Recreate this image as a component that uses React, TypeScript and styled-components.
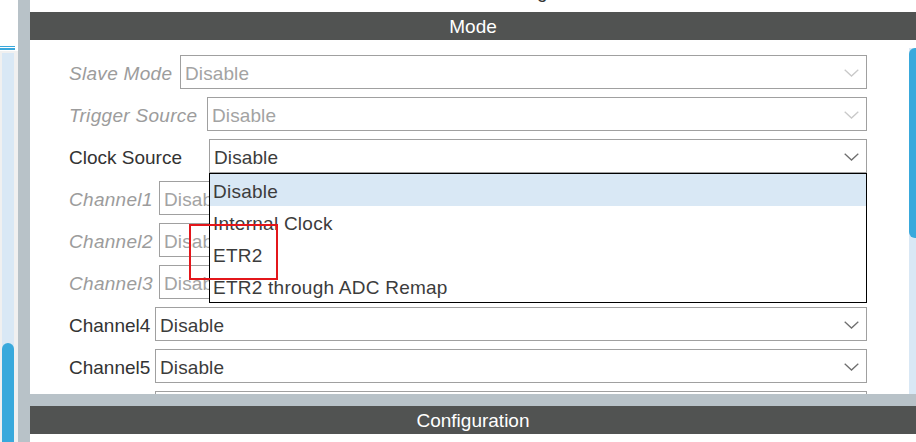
import React from 'react';
import styled, { createGlobalStyle } from 'styled-components';

const GlobalStyle = createGlobalStyle`
  html, body { margin: 0; padding: 0; background: #ffffff; overflow: hidden; }
  body { font-family: "Liberation Sans", Arial, sans-serif; }
  * { box-sizing: border-box; }
`;

const Frame = styled.div`
  position: relative;
  display: flex;
  width: 916px;
  height: 442px;
  overflow: hidden;
  background: #ffffff;
`;

const LeftPane = styled.div`
  width: 18px;
  flex: none;
  display: flex;
  flex-direction: column;
  background: #ffffff;
`;

const TopGap = styled.div`
  height: 46px;
  flex: none;
`;

const AccentLine = styled.div<{ $h: number }>`
  width: 15px;
  height: ${p => p.$h}px;
  flex: none;
  background: #3aa8dc;
  margin-bottom: 1px;
`;

const LeftScrollArea = styled.div`
  flex: 1;
  background: #f0f0f0;
  padding: 2px 4px 0 2px;
  display: flex;
`;

const VTrack = styled.div`
  flex: 1;
  background: #d9e8f5;
  display: flex;
  flex-direction: column;
  justify-content: flex-end;
`;

const LeftThumb = styled.div`
  height: 99px;
  background: #39a9dc;
  border-radius: 6px 6px 0 0;
`;

const VSplitter = styled.div`
  width: 12px;
  flex: none;
  background: #b8c2c8;
`;

const MainPane = styled.div`
  flex: 1;
  display: flex;
  flex-direction: column;
  min-width: 0;
`;

const TitleStrip = styled.div`
  height: 12px;
  flex: none;
  overflow: hidden;
  text-align: center;
`;

const TitleText = styled.div`
  margin-top: -18px;
  font-size: 19px;
  line-height: 19px;
  color: #333333;
  padding-left: 14px;
`;

const SectionHeader = styled.div`
  height: 28px;
  flex: none;
  overflow: hidden;
  background: #515352;
  color: #ffffff;
  font-size: 19px;
  line-height: 30px;
  text-align: center;
`;

const Body = styled.div`
  flex: 1;
  display: flex;
  overflow: hidden;
  min-height: 0;
`;

const Form = styled.div`
  flex: 1;
  display: flex;
  flex-direction: column;
  gap: 8px;
  padding: 15px 42px 0 39px;
`;

const Row = styled.div`
  display: flex;
  align-items: center;
  height: 34px;
  flex: none;
`;

const Label = styled.div<{ $w: number; $disabled?: boolean }>`
  width: ${p => p.$w}px;
  flex: none;
  padding-top: 3px;
  font-size: 19px;
  letter-spacing: ${p => (p.$disabled ? '0.3px' : '0')};
  white-space: nowrap;
  font-style: ${p => (p.$disabled ? 'italic' : 'normal')};
  color: ${p => (p.$disabled ? '#9c9c9c' : '#333333')};
`;

const Select = styled.div<{ $open?: boolean }>`
  position: relative;
  flex: 1;
  height: 34px;
  border: 1px solid #a0a0a0;
  background: #ffffff;
  display: flex;
  align-items: center;
  justify-content: space-between;
  padding: 0 7px 0 4px;
  z-index: ${p => (p.$open ? 5 : 'auto')};
`;

const SelectText = styled.span<{ $disabled?: boolean }>`
  padding-top: 3px;
  font-size: 19px;
  letter-spacing: 0.1px;
  white-space: nowrap;
  color: ${p => (p.$disabled ? '#a3a3a3' : '#3c3c3c')};
`;

const Dropdown = styled.div`
  position: absolute;
  top: calc(100% + 1px);
  left: -1px;
  right: -1px;
  border: 1px solid #000000;
  background: #ffffff;
  display: flex;
  flex-direction: column;
`;

const Option = styled.div<{ $active?: boolean }>`
  height: 32px;
  display: flex;
  align-items: center;
  padding: 3px 0 0 3px;
  font-size: 19px;
  letter-spacing: 0.25px;
  color: #3c3c3c;
  white-space: nowrap;
  background: ${p => (p.$active ? '#d9e8f5' : '#ffffff')};
`;

const RightScroll = styled.div`
  width: 7px;
  flex: none;
  margin-top: 8px;
  background: #d9e8f5;
  display: flex;
  flex-direction: column;
`;

const RightThumb = styled.div`
  height: 190px;
  background: #39a9dc;
  border-radius: 6px 0 0 6px;
`;

const HSplitter = styled.div`
  height: 12px;
  flex: none;
  background: #b8c2c8;
`;

const BottomBody = styled.div`
  height: 8px;
  flex: none;
  background: #ffffff;
`;

const Annotation = styled.div`
  position: absolute;
  left: 189px;
  top: 224px;
  width: 89px;
  height: 56px;
  border: 2px solid #e3161b;
  z-index: 10;
  pointer-events: none;
`;

const Chevron: React.FC<{ disabled?: boolean }> = ({ disabled }) => (
  <svg width="15" height="8" viewBox="0 0 15 8" style={{ flex: 'none', marginTop: '1px' }}>
    <path
      d="M0.7 0.8 L7.5 7 L14.3 0.8"
      fill="none"
      stroke={disabled ? '#c9c9c9' : '#6f6f6f'}
      strokeWidth="1.3"
    />
  </svg>
);

type RowDef = { label: string; w: number; disabled?: boolean; open?: boolean };

const rows: RowDef[] = [
  { label: 'Slave Mode', w: 111, disabled: true },
  { label: 'Trigger Source', w: 138, disabled: true },
  { label: 'Clock Source', w: 140, open: true },
  { label: 'Channel1', w: 90, disabled: true },
  { label: 'Channel2', w: 90, disabled: true },
  { label: 'Channel3', w: 90, disabled: true },
  { label: 'Channel4', w: 86 },
  { label: 'Channel5', w: 86 },
  { label: 'Channel6', w: 86 },
];

const options = ['Disable', 'Internal Clock', 'ETR2', 'ETR2 through ADC Remap'];

export default function App() {
  return (
    <>
      <GlobalStyle />
      <Frame>
        <LeftPane>
          <TopGap />
          <AccentLine $h={1} />
          <AccentLine $h={2} />
          <LeftScrollArea>
            <VTrack>
              <LeftThumb />
            </VTrack>
          </LeftScrollArea>
        </LeftPane>
        <VSplitter />
        <MainPane>
          <TitleStrip>
            <TitleText>TIM2 Mode and Configuration</TitleText>
          </TitleStrip>
          <SectionHeader>Mode</SectionHeader>
          <Body>
            <Form>
              {rows.map(r => (
                <Row key={r.label}>
                  <Label $w={r.w} $disabled={r.disabled}>
                    {r.label}
                  </Label>
                  <Select $open={r.open}>
                    <SelectText $disabled={r.disabled}>Disable</SelectText>
                    <Chevron disabled={r.disabled} />
                    {r.open && (
                      <Dropdown>
                        {options.map((o, i) => (
                          <Option key={o} $active={i === 0}>
                            {o}
                          </Option>
                        ))}
                      </Dropdown>
                    )}
                  </Select>
                </Row>
              ))}
            </Form>
            <RightScroll>
              <RightThumb />
            </RightScroll>
          </Body>
          <HSplitter />
          <SectionHeader>Configuration</SectionHeader>
          <BottomBody />
        </MainPane>
        <Annotation />
      </Frame>
    </>
  );
}
